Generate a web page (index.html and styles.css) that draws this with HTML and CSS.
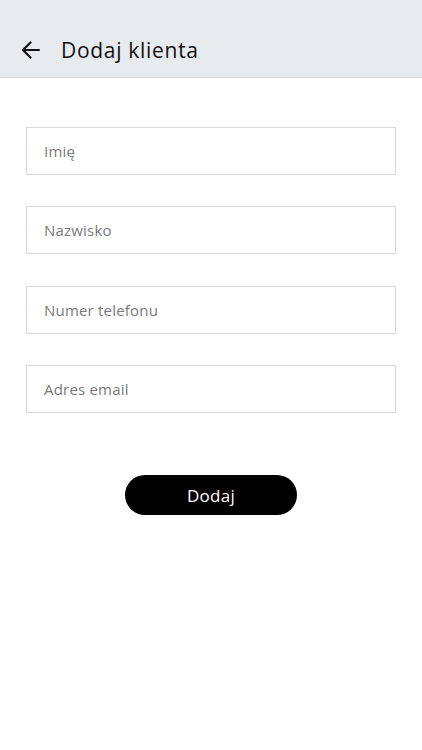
FILE: index.html
```html
<!DOCTYPE html>
<html lang="pl">
<head>
    <meta charset="UTF-8">
    <meta name="viewport" content="width=device-width, initial-scale=1.0">
    <link rel="stylesheet" href="styles.css">
    <title>Dodaj klienta</title>
</head>
<body>
<div class="topbar">
    <a href="#" class="back">
        <svg width="20" height="20" viewBox="0 0 20 20" fill="none" stroke="#111" stroke-width="2.2" stroke-linecap="round" stroke-linejoin="round">
            <path d="M18 10H2.5"/>
            <path d="M9.5 2.5L2 10l7.5 7.5"/>
        </svg>
    </a>
    <h1>Dodaj klienta</h1>
</div>
<form class="clientForm">
    <input type="text" class="field" placeholder="Imię">
    <input type="text" class="field" placeholder="Nazwisko">
    <input type="text" class="field" placeholder="Numer telefonu">
    <input type="text" class="field" placeholder="Adres email">
    <div class="actions">
        <button type="button" class="btn">Dodaj</button>
    </div>
</form>
</body>
</html>
```

FILE: styles.css
```css
body {
    margin: 0;
    background: #ffffff;
    font-family: "Open Sans", "Noto Sans", sans-serif;
}

.topbar {
    height: 78px;
    background-color: #e7ebee;
    border-bottom: 1px solid #dadee2;
    display: flex;
    align-items: center;
    padding: 22px 21px 0;
    box-sizing: border-box;
}

.back {
    display: flex;
    width: 20px;
    height: 20px;
}

h1 {
    margin: 0 0 0 20px;
    font-size: 21px;
    font-weight: 500;
    color: #111;
    letter-spacing: 0.7px;
}

.clientForm {
    display: flex;
    flex-direction: column;
    gap: 31.3px;
    padding: 49px 26px 0;
}

.field {
    height: 48px;
    border: 1.5px solid #d8d8d8;
    border-radius: 0;
    padding: 0 17px;
    font-family: inherit;
    font-size: 15px;
    color: #333;
    outline: none;
    box-sizing: border-box;
}

.field::placeholder {
    color: #7a7a7a;
    letter-spacing: 0.2px;
}

.actions {
    display: flex;
    justify-content: center;
    padding-top: 31px;
}

.btn {
    width: 172px;
    height: 40px;
    background-color: #000;
    border: none;
    border-radius: 20px;
    color: #fff;
    font-family: inherit;
    font-size: 17px;
    font-weight: 500;
    letter-spacing: 0.3px;
    cursor: pointer;
}
```
